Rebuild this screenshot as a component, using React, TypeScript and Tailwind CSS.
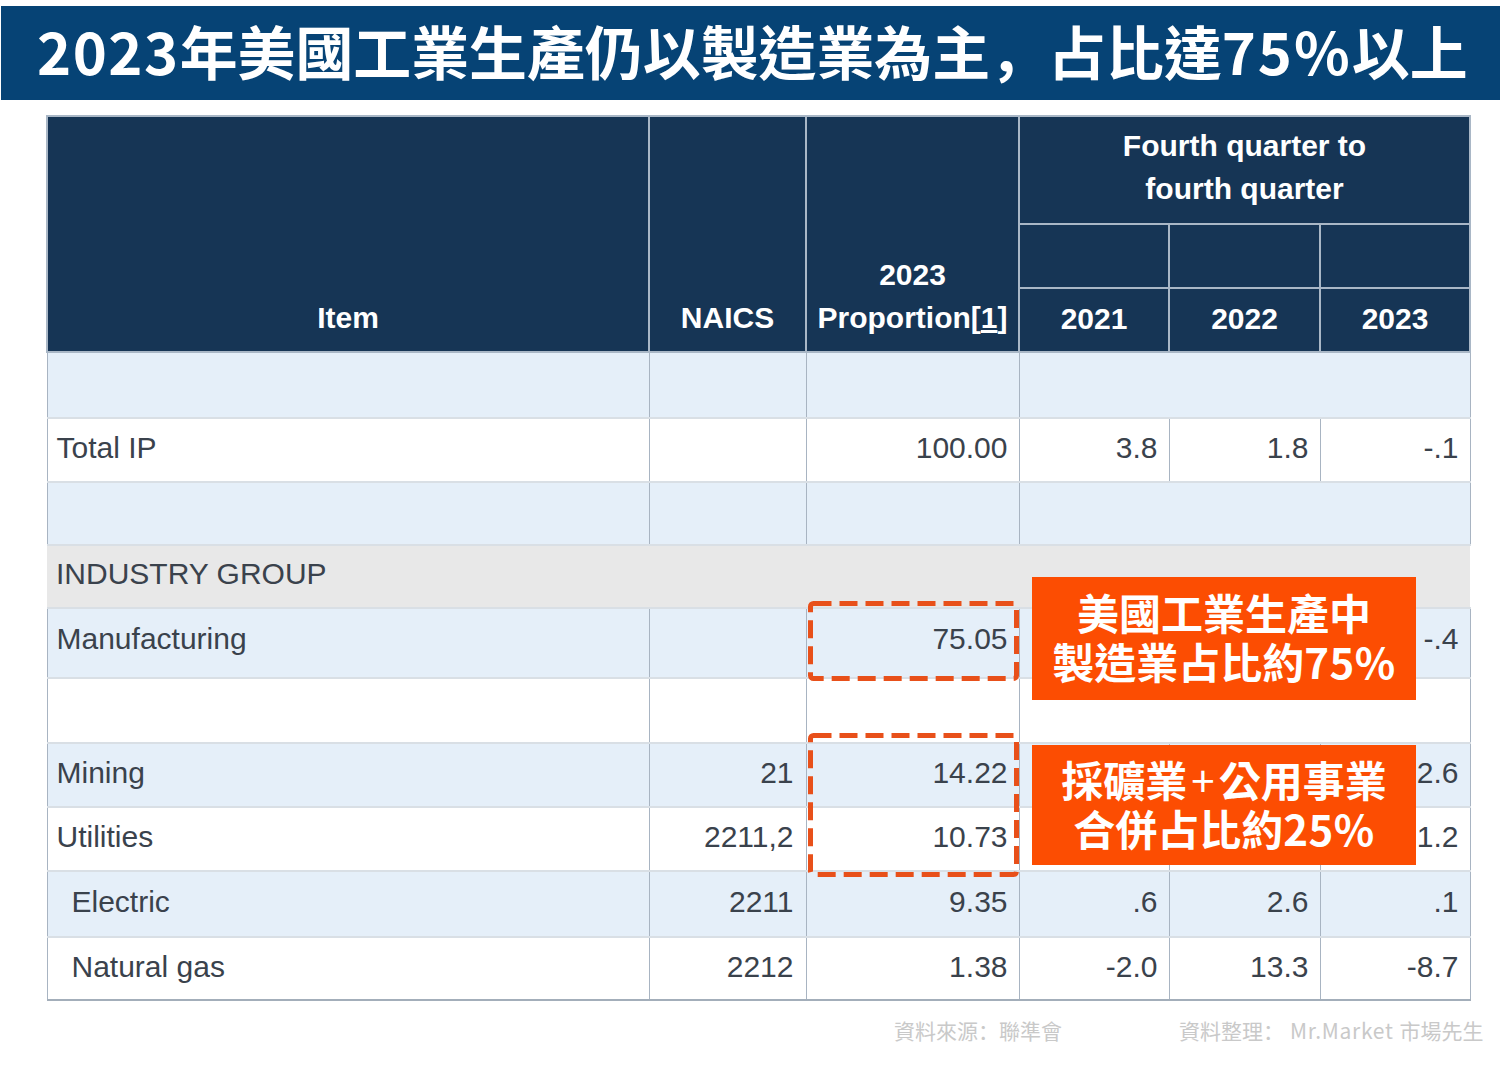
import React from 'react';

const SANS = "font-['Liberation_Sans',Arial,sans-serif]";
const CJK = "font-['Noto_Sans_CJK_TC','Noto_Sans',sans-serif]";
const CJK_SC = "font-['Noto_Sans_CJK_SC','Noto_Sans',sans-serif]";

type RowData = { h: string; bg: string; pb?: string; merged?: boolean; indent?: boolean; cells: string[] };

const rows: RowData[] = [
  { h: 'h-[66px]', bg: 'bg-[#e5eff9]', merged: true, cells: ['', '', '', '', '', ''] },
  { h: 'h-[64px]', bg: 'bg-white', cells: ['Total IP', '', '100.00', '3.8', '1.8', '-.1'] },
  { h: 'h-[63px]', bg: 'bg-[#e5eff9]', merged: true, cells: ['', '', '', '', '', ''] },
];

const lower: RowData[] = [
  { h: 'h-[70px]', bg: 'bg-[#e5eff9]', pb: 'pb-[9px]', cells: ['Manufacturing', '', '75.05', '', '', '-.4'] },
  { h: 'h-[65px]', bg: 'bg-white', merged: true, cells: ['', '', '', '', '', ''] },
  { h: 'h-[64px]', bg: 'bg-[#e5eff9]', cells: ['Mining', '21', '14.22', '', '', '2.6'] },
  { h: 'h-[64px]', bg: 'bg-white', cells: ['Utilities', '2211,2', '10.73', '', '', '1.2'] },
  { h: 'h-[66px]', bg: 'bg-[#e5eff9]', indent: true, cells: ['Electric', '2211', '9.35', '.6', '2.6', '.1'] },
  { h: 'h-[63px]', bg: 'bg-white', indent: true, cells: ['Natural gas', '2212', '1.38', '-2.0', '13.3', '-8.7'] },
];

const cellLines = 'border-x border-x-[#a8b4c2] border-y-2 border-y-[#d9dfe5]';

const Row = ({ row, last }: { row: RowData; last?: boolean }) => {
  const lines = `${cellLines} ${last ? 'border-b-[#a3aeba]' : ''}`;
  const pb = row.pb ?? 'pb-[5px]';
  return (
    <tr className={`${row.h} ${row.bg}`}>
      <td className={`${lines} pr-2 ${pb} ${row.indent ? 'pl-[24px]' : 'pl-[9px]'}`}>{row.cells[0]}</td>
      <td className={`${lines} px-3 ${pb} text-right`}>{row.cells[1]}</td>
      <td className={`${lines} px-[11px] ${pb} text-right`}>{row.cells[2]}</td>
      {row.merged ? (
        <td colSpan={3} className={lines} />
      ) : (
        row.cells.slice(3).map((c, i) => (
          <td key={i} className={`${lines} px-[11px] ${pb} text-right`}>{c}</td>
        ))
      )}
    </tr>
  );
};

const DashedBox = ({ className, w, h }: { className: string; w: number; h: number }) => (
  <svg className={`absolute ${className}`} width={w} height={h} viewBox={`0 0 ${w} ${h}`}>
    <rect x="2.5" y="2.5" width={w - 5} height={h - 5} rx="3" fill="none" stroke="#e8501a" strokeWidth="5" strokeDasharray="18 8" />
  </svg>
);

const Callout = ({ className, children }: { className: string; children: React.ReactNode }) => (
  <div className={`absolute w-[384px] pb-[5px] bg-[#fc4d02] flex flex-col items-center justify-center text-white font-bold text-[42px] leading-[49px] ${CJK} ${className}`}>
    {children}
  </div>
);

export default function App() {
  return (
    <div className="relative w-[1500px] h-[1065px] bg-white overflow-hidden pt-[6px]">
      <div className={`ml-px h-[94px] pb-[4px] bg-[#064375] flex items-center pl-[36px] text-white font-bold text-[57.9px] leading-none whitespace-nowrap ${CJK}`}>
        <span className="tracking-[1.5px]">2023</span>年美國工業生產仍以製造業為主<span className={CJK_SC}>，</span>占比達<span className="tracking-[2px]">75%</span>以上
      </div>

      <div className={`ml-[46px] mt-[15px] w-[1423px] text-[30px] text-[#3a424c] ${SANS}`}>
        <table className="w-full table-fixed border-collapse">
          <colgroup>
            <col className="w-[602px]" />
            <col className="w-[157px]" />
            <col className="w-[213px]" />
            <col className="w-[150px]" />
            <col className="w-[151px]" />
            <col className="w-[150px]" />
          </colgroup>
          <thead className="bg-[#163555] text-white font-bold text-[30px] leading-[43px]">
            <tr className="h-[108px]">
              <th rowSpan={3} className="border-2 border-[#a9b7c6] align-bottom pb-[12px] font-bold">Item</th>
              <th rowSpan={3} className="border-2 border-[#a9b7c6] align-bottom pb-[12px] font-bold">NAICS</th>
              <th rowSpan={3} className="border-2 border-[#a9b7c6] align-bottom pb-[12px] font-bold whitespace-nowrap">
                2023<br />Proportion[<span className="underline">1</span>]
              </th>
              <th colSpan={3} className="border-2 border-[#a9b7c6] pb-[7px] font-bold">Fourth quarter to<br />fourth quarter</th>
            </tr>
            <tr className="h-[64px]">
              <th className="border-2 border-[#a9b7c6]" />
              <th className="border-2 border-[#a9b7c6]" />
              <th className="border-2 border-[#a9b7c6]" />
            </tr>
            <tr className="h-[64px]">
              <th className="border-2 border-[#a9b7c6] pb-[4px] font-bold">2021</th>
              <th className="border-2 border-[#a9b7c6] pb-[4px] font-bold">2022</th>
              <th className="border-2 border-[#a9b7c6] pb-[4px] font-bold">2023</th>
            </tr>
          </thead>
          <tbody>
            {rows.map((r, i) => <Row key={i} row={r} />)}
            <tr className="h-[63px] bg-[#e8e8e8]">
              <td colSpan={6} className="border-y-2 border-y-[#d9dfe5] pl-[9px] pb-[6px]">INDUSTRY GROUP</td>
            </tr>
            {lower.map((r, i) => <Row key={i} row={r} last={i === lower.length - 1} />)}
          </tbody>
        </table>
      </div>

      <div className={`mt-[15px] ml-[894px] flex text-[21px] leading-[28px] text-[#c9c9c9] whitespace-nowrap ${CJK}`}>
        <span className="w-[285px]">資料來源<span className={CJK_SC}>：</span>聯準會</span>
        <span>
          資料整理<span className={CJK_SC}>：</span>
          <span className="ml-[6px] mr-[6px] tracking-[0.7px]">Mr.Market</span>市場先生
        </span>
      </div>

      <DashedBox className="left-[808px] top-[601px]" w={211} h={80} />
      <DashedBox className="left-[808px] top-[733px]" w={211} h={144} />
      <Callout className="left-[1032px] top-[577px] h-[123px]">
        <div>美國工業生產中</div>
        <div>製造業占比約<span className="tracking-[0.5px]">75%</span></div>
      </Callout>
      <Callout className="left-[1032px] top-[745px] h-[120px]">
        <div>採礦業<span className="px-[4px] font-normal">+</span>公用事業</div>
        <div>合併占比約<span className="tracking-[0.5px]">25%</span></div>
      </Callout>
    </div>
  );
}
